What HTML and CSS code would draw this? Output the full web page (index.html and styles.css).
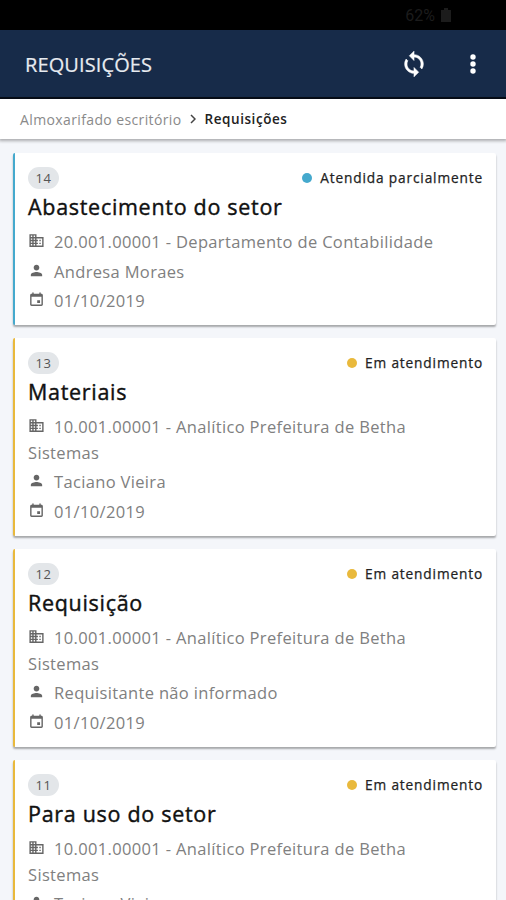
FILE: index.html
```html
<!DOCTYPE html>
<html lang="pt-BR">
<head>
    <meta charset="UTF-8">
    <title>Requisições</title>
    <link rel="stylesheet" href="styles.css">
</head>
<body>
    <!-- Shared icons -->
    <svg class="icon-defs">
        <symbol id="icon-business" viewBox="0 0 24 24">
            <path d="M12 7V3H2v18h20V7H12zM6 19H4v-2h2v2zm0-4H4v-2h2v2zm0-4H4V9h2v2zm0-4H4V5h2v2zm4 12H8v-2h2v2zm0-4H8v-2h2v2zm0-4H8V9h2v2zm0-4H8V5h2v2zm10 12h-8v-2h2v-2h-2v-2h2v-2h-2V9h8v10zm-2-8h-2v2h2v-2zm0 4h-2v2h2v-2z"/>
        </symbol>
        <symbol id="icon-person" viewBox="0 0 24 24">
            <path d="M12 12c2.21 0 4-1.79 4-4s-1.79-4-4-4-4 1.79-4 4 1.79 4 4 4zm0 2c-2.67 0-8 1.34-8 4v2h16v-2c0-2.66-5.33-4-8-4z"/>
        </symbol>
        <symbol id="icon-event" viewBox="0 0 24 24">
            <path d="M17 13h-4v4h4v-4zM16 2v2H8V2H6v2H5c-1.1 0-2 .9-2 2v13c0 1.1.9 2 2 2h14c1.1 0 2-.9 2-2V6c0-1.1-.9-2-2-2h-1V2h-2zm3 17H5V8h14v11z"/>
        </symbol>
    </svg>

    <div class="status-bar">
        <span>62%</span>
        <svg class="battery" viewBox="0 0 10 14"><path d="M3 0h4v2h3v12H0V2h3z"/></svg>
    </div>
    <header class="toolbar">
        <h1 class="toolbar-title">REQUISIÇÕES</h1>
        <svg class="sync" viewBox="0 0 24 24"><path d="M12 4V1L8 5l4 4V6c3.310 0 6 2.690 6 6 0 1.010-.25 1.970-.7 2.800l1.460 1.460C19.540 15.030 20 13.570 20 12c0-4.420-3.580-8-8-8zm0 14c-3.310 0-6-2.690-6-6 0-1.010.25-1.970.7-2.800L5.240 7.740C4.460 8.970 4 10.430 4 12c0 4.420 3.580 8 8 8v3l4-4-4-4v3z"/></svg>
        <svg class="more" viewBox="0 0 6 20"><circle cx="3" cy="3" r="2.700"/><circle cx="3" cy="10" r="2.700"/><circle cx="3" cy="17" r="2.700"/></svg>
    </header>
    <nav class="breadcrumb">
        <span class="crumb">Almoxarifado escritório</span>
        <svg class="chevron" viewBox="0 0 6 10"><path d="M1 1l4 4-4 4"/></svg>
        <span class="crumb-current">Requisições</span>
    </nav>

    <main class="list">
        <article class="card card-partial">
            <div class="card-top">
                <span class="badge">14</span>
                <span class="status">Atendida parcialmente</span>
            </div>
            <h2 class="card-title">Abastecimento do setor</h2>
            <p class="row"><svg class="icon"><use href="#icon-business"/></svg>20.001.00001 - Departamento de Contabilidade</p>
            <p class="row"><svg class="icon"><use href="#icon-person"/></svg>Andresa Moraes</p>
            <p class="row"><svg class="icon"><use href="#icon-event"/></svg>01/10/2019</p>
        </article>
        <article class="card">
            <div class="card-top">
                <span class="badge">13</span>
                <span class="status">Em atendimento</span>
            </div>
            <h2 class="card-title">Materiais</h2>
            <p class="row"><svg class="icon"><use href="#icon-business"/></svg>10.001.00001 - Analítico Prefeitura de Betha Sistemas</p>
            <p class="row"><svg class="icon"><use href="#icon-person"/></svg>Taciano Vieira</p>
            <p class="row"><svg class="icon"><use href="#icon-event"/></svg>01/10/2019</p>
        </article>
        <article class="card">
            <div class="card-top">
                <span class="badge">12</span>
                <span class="status">Em atendimento</span>
            </div>
            <h2 class="card-title">Requisição</h2>
            <p class="row"><svg class="icon"><use href="#icon-business"/></svg>10.001.00001 - Analítico Prefeitura de Betha Sistemas</p>
            <p class="row"><svg class="icon"><use href="#icon-person"/></svg>Requisitante não informado</p>
            <p class="row"><svg class="icon"><use href="#icon-event"/></svg>01/10/2019</p>
        </article>
        <article class="card">
            <div class="card-top">
                <span class="badge">11</span>
                <span class="status">Em atendimento</span>
            </div>
            <h2 class="card-title">Para uso do setor</h2>
            <p class="row"><svg class="icon"><use href="#icon-business"/></svg>10.001.00001 - Analítico Prefeitura de Betha Sistemas</p>
            <p class="row"><svg class="icon"><use href="#icon-person"/></svg>Taciano Vieira</p>
        </article>
    </main>
</body>
</html>
```

FILE: styles.css
```css
* {
    box-sizing: border-box;
}
body {
    margin: 0;
    height: 900px;
    overflow: hidden;
    display: flex;
    flex-direction: column;
    background-color: #f4f6fa;
    font-family: "Open Sans", "Noto Sans", sans-serif;
}
.icon-defs {
    display: none;
}
.status-bar {
    flex: none;
    display: flex;
    align-items: center;
    justify-content: flex-end;
    gap: 6px;
    height: 30px;
    padding-right: 55px;
    background-color: #000;
    color: #1c1c1c;
    font-family: Roboto, sans-serif;
    font-size: 16px;
}
.battery {
    width: 10px;
    height: 14px;
    fill: #1c1c1c;
}
.toolbar {
    flex: none;
    display: flex;
    align-items: center;
    height: 69px;
    padding: 0 30px 0 25px;
    background-color: #172b49;
    border-bottom: 2px solid #070d18;
}
.toolbar-title {
    flex: 1;
    margin: 0;
    padding-top: 2px;
    color: #e8ebf0;
    font-size: 20px;
    font-weight: 400;
    letter-spacing: 0.1px;
    -webkit-text-stroke: 0.2px #e8ebf0;
}
.sync {
    width: 28px;
    height: 28px;
    margin-right: 42px;
    fill: #fff;
    stroke: #fff;
    stroke-width: 0.5;
}
.more {
    width: 6px;
    height: 20px;
    fill: #fff;
}
.breadcrumb {
    flex: none;
    display: flex;
    align-items: center;
    height: 40px;
    padding-left: 20px;
    background-color: #fff;
    box-shadow: 0 1px 3px 1px rgba(0, 0, 0, 0.3);
    font-size: 14px;
}
.crumb {
    color: #8a8a8a;
    letter-spacing: 0.38px;
}
.crumb-current {
    color: #222;
    font-weight: 600;
    font-size: 13.500px;
    letter-spacing: 0.55px;
}
.chevron {
    width: 6px;
    height: 10px;
    margin: 0 9px 0 8px;
    fill: none;
    stroke: #444;
    stroke-width: 1.5;
}
.list {
    display: flex;
    flex-direction: column;
    gap: 12.700px;
    padding: 14px 10px 0 13px;
}
.card {
    flex: none;
    padding: 14px 13px 7.400px;
    background-color: #fff;
    border-left: 2px solid #e9b93c;
    border-radius: 2px;
    box-shadow: 0 2px 2px rgba(0, 0, 0, 0.32);
}
.card-partial {
    border-left-color: #45a9cd;
}
.card-top {
    display: flex;
    justify-content: space-between;
    align-items: center;
    height: 22px;
}
.badge {
    width: 31px;
    height: 22px;
    border-radius: 11px;
    background-color: #e3e6e9;
    color: #555;
    font-size: 13px;
    letter-spacing: 0.5px;
    line-height: 22px;
    text-align: center;
}
/* thin stroke gives a medium weight */
.status {
    display: flex;
    align-items: center;
    gap: 8.500px;
    color: #222;
    font-size: 13.700px;
    letter-spacing: 0.85px;
    line-height: 20px;
    -webkit-text-stroke: 0.25px #222;
}
.status::before {
    content: "";
    width: 10px;
    height: 10px;
    border-radius: 50%;
    background-color: #e9b93c;
}
.card-partial .status::before {
    background-color: #45a9cd;
}
.card-title {
    margin: 4px 0 8px;
    color: #111;
    font-size: 21.500px;
    font-weight: 400;
    letter-spacing: 0.7px;
    line-height: 28px;
    -webkit-text-stroke: 0.4px #111;
}
.row {
    margin: 0 0 3.600px;
    padding-right: 20px;
    color: #808080;
    font-size: 16.500px;
    letter-spacing: 0.34px;
    line-height: 26px;
}
.icon {
    width: 17px;
    height: 17px;
    margin-right: 9px;
    vertical-align: -1px;
    fill: #666;
}
```
